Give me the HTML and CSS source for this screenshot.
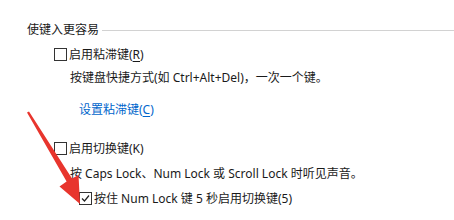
FILE: index.html
```html
<!DOCTYPE html>
<html lang="zh-CN">
<head>
  <meta charset="UTF-8">
  <title>使键入更容易</title>
  <link rel="stylesheet" href="styles.css">
</head>
<body>
  <div class="panel">
    <!-- Group header -->
    <div class="group-title">
      <span>使键入更容易</span>
      <span class="group-line"></span>
    </div>

    <!-- Sticky keys -->
    <label class="option opt-sticky">
      <span class="checkbox"></span>
      <span>启用粘滞键(<u>R</u>)</span>
    </label>
    <div class="hint hint-sticky">按键盘快捷方式(如 Ctrl+Alt+Del)，一次一个键。</div>
    <a class="link" href="#">设置粘滞键(<u>C</u>)</a>

    <!-- Toggle keys -->
    <label class="option opt-toggle">
      <span class="checkbox"></span>
      <span>启用切换键(K)</span>
    </label>
    <div class="hint hint-toggle">按 Caps Lock、Num Lock 或 Scroll Lock 时听见声音。</div>
    <label class="option sub-option">
      <span class="checkbox checked">
        <svg viewBox="0 0 11 11"><path d="M2 5.5L4.5 8L9 2.5" fill="none" stroke="#222" stroke-width="1.2"/></svg>
      </span>
      <span>按住 Num Lock 键 5 秒启用切换键(5)</span>
    </label>
  </div>

  <!-- Annotation arrow -->
  <svg class="arrow" viewBox="0 0 454 220">
    <polygon points="29,111.4 72,178.4 78.5,175 80,204 59.5,186.5 66.6,181.6 27,112.6" fill="#e8352d"/>
  </svg>
</body>
</html>
```

FILE: styles.css
```css
* {
  box-sizing: border-box;
}

body {
  margin: 0;
  width: 454px;
  height: 220px;
  overflow: hidden;
  background: #ffffff;
  color: #1a1a1a;
  font-family: "Segoe UI", "Noto Sans", "Noto Sans CJK SC", sans-serif;
  font-size: 12px;
  position: relative;
}

.panel {
  display: flex;
  flex-direction: column;
  align-items: flex-start;
  padding: 21px 0 0 27px;
}

.group-title {
  display: flex;
  align-items: center;
  gap: 3px;
  height: 16px;
  width: 100%;
}

.group-line {
  flex: 1;
  height: 1px;
  background: #d2d2d2;
  margin-top: 2px;
}

.option {
  display: flex;
  align-items: center;
  gap: 2px;
  height: 16px;
  margin-left: 27px;
}

.opt-sticky {
  margin-top: 9px;
}

.opt-toggle {
  margin-top: 22px;
}

.sub-option {
  margin-top: 8px;
  margin-left: 52px;
}

.checkbox {
  width: 13px;
  height: 13px;
  border: 1px solid #333333;
  background: #ffffff;
  display: flex;
  align-items: center;
  justify-content: center;
  flex-shrink: 0;
}

.checkbox svg {
  width: 11px;
  height: 11px;
}

.hint {
  height: 16px;
  line-height: 16px;
  margin-left: 43px;
  white-space: nowrap;
}

.hint-sticky {
  margin-top: 8px;
}

.hint-toggle {
  margin-top: 10px;
}

.link {
  height: 16px;
  line-height: 16px;
  margin-top: 16px;
  margin-left: 52px;
  color: #0066cc;
  text-decoration: none;
}

u {
  text-decoration-thickness: 1px;
  text-underline-offset: 2px;
}

.arrow {
  position: absolute;
  left: 0;
  top: 0;
  width: 454px;
  height: 220px;
  pointer-events: none;
}
```
